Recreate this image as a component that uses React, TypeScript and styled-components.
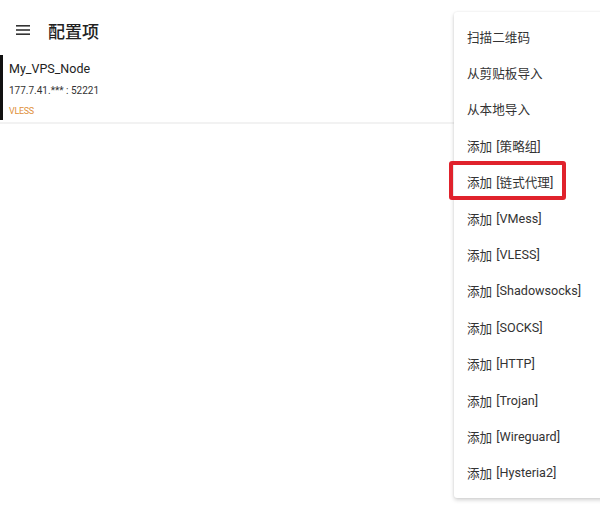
import styled, { createGlobalStyle } from 'styled-components';

const GlobalStyle = createGlobalStyle`
  html, body {
    margin: 0;
    padding: 0;
    background: #ffffff;
    font-family: Roboto, 'Noto Sans CJK SC', sans-serif;
  }
`;

const Screen = styled.div`
  position: relative;
  width: 600px;
  height: 518px;
  overflow: hidden;
  background: #ffffff;
`;

const TopBar = styled.header`
  display: flex;
  align-items: center;
  height: 36px;
  padding: 12px 0 0 15px;
  gap: 17px;
  color: #222;
`;

const Title = styled.h1`
  margin: 0;
  font-size: 17px;
  font-weight: 500;
  font-family: 'Noto Sans CJK SC', sans-serif;
  letter-spacing: 0;
`;

const ProfileRow = styled.div`
  display: flex;
  margin-top: 7px;
  border-bottom: 2px solid #f2f2f2;
`;

const ActiveBar = styled.div`
  width: 3px;
  background: #111;
  margin-bottom: 2px;
`;

const ProfileInfo = styled.div`
  display: flex;
  flex-direction: column;
  padding: 4px 0 2px 6px;
`;

const ProfileName = styled.div`
  font-size: 12.5px;
  color: #222;
  line-height: 20px;
`;

const ProfileAddr = styled.div`
  font-size: 10px;
  color: #333;
  line-height: 20px;
  margin-top: 2px;
`;

const ProfileType = styled.div`
  font-size: 9px;
  color: #e0913a;
  line-height: 18px;
  letter-spacing: -0.3px;
  margin-top: 1px;
`;

const Menu = styled.ul`
  position: absolute;
  top: 12px;
  left: 454px;
  width: 160px;
  margin: 0;
  padding: 6px 0 7px;
  list-style: none;
  background: #fff;
  box-shadow: 0 2px 4px rgba(0, 0, 0, 0.18), 0 0 2px rgba(0, 0, 0, 0.08);
  border-radius: 3px;
`;

const MenuItem = styled.li<{ $marked?: boolean }>`
  position: relative;
  height: 36.4px;
  display: flex;
  align-items: center;
  padding-left: 13px;
  font-size: 12.6px;
  color: #333;
  font-family: Roboto, 'Noto Sans CJK SC', sans-serif;
  white-space: nowrap;

  ${(p) =>
    p.$marked &&
    `
    &::after {
      content: '';
      position: absolute;
      left: -5px;
      top: -3px;
      width: 117px;
      height: 39px;
      box-sizing: border-box;
      border: 4px solid #e0222c;
      border-radius: 3px;
    }
  `}
`;

const Bracket = styled.span`
  margin-left: 4px;
`;

function MenuIcon() {
  return (
    <svg width="16" height="16" viewBox="0 0 16 16">
      <rect x="1" y="3" width="14" height="1.6" fill="#333" />
      <rect x="1" y="7.2" width="14" height="1.6" fill="#333" />
      <rect x="1" y="11.4" width="14" height="1.6" fill="#333" />
    </svg>
  );
}

const plain = ['扫描二维码', '从剪贴板导入', '从本地导入'];
const kinds = [
  '策略组',
  '链式代理',
  'VMess',
  'VLESS',
  'Shadowsocks',
  'SOCKS',
  'HTTP',
  'Trojan',
  'Wireguard',
  'Hysteria2',
];

export default function App() {
  return (
    <Screen>
      <GlobalStyle />
      <TopBar>
        <MenuIcon />
        <Title>配置项</Title>
      </TopBar>
      <ProfileRow>
        <ActiveBar />
        <ProfileInfo>
          <ProfileName>My_VPS_Node</ProfileName>
          <ProfileAddr>177.7.41.*** : 52221</ProfileAddr>
          <ProfileType>VLESS</ProfileType>
        </ProfileInfo>
      </ProfileRow>
      <Menu>
        {plain.map((t) => (
          <MenuItem key={t}>{t}</MenuItem>
        ))}
        {kinds.map((k) => (
          <MenuItem key={k} $marked={k === '链式代理'}>
            添加<Bracket>[{k}]</Bracket>
          </MenuItem>
        ))}
      </Menu>
    </Screen>
  );
}
